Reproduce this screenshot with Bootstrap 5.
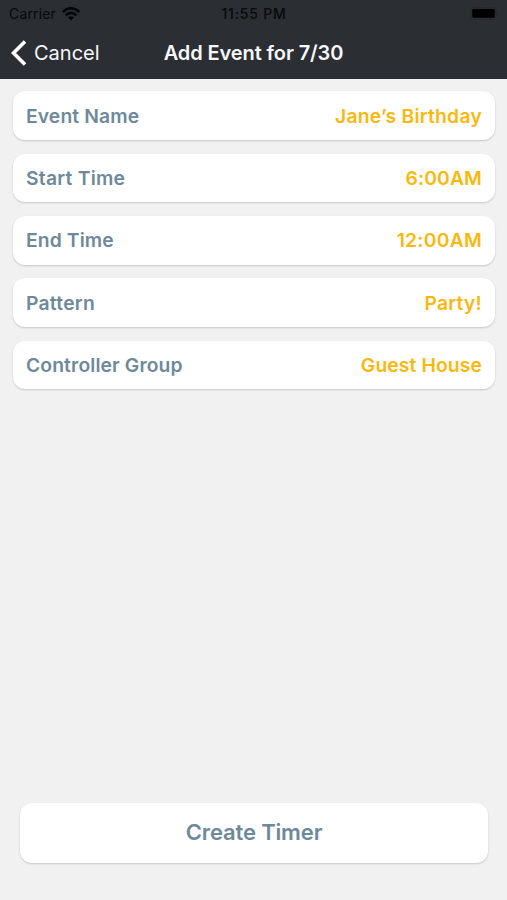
<!DOCTYPE html>
<html lang="en">
<head>
<meta charset="utf-8">
<meta name="viewport" content="width=device-width, initial-scale=1">
<title>Add Event</title>
<link href="https://cdn.jsdelivr.net/npm/bootstrap@5.3.0/dist/css/bootstrap.min.css" rel="stylesheet">
<style>
body { font-family: Inter, "Liberation Sans", sans-serif; background: #f1f1f1; }
svg { display: block; }
.top-bar { height: 79px; background: #2b2e33; }
.status-row { height: 27px; font-size: 14px; line-height: 27px; color: #08090b; padding: 0 8px 0 9px; }
.carrier { letter-spacing: .15px; margin-right: 6px; }
.status-time { font-weight: 500; letter-spacing: .8px; }
.title-row { height: 52px; line-height: 52px; color: #f7f8fa; padding: 0 11px; }
.cancel-btn { font-size: 20px; color: inherit; gap: 7px; }
.screen-title { font-size: 20px; font-weight: 600; letter-spacing: -.1px; }
.fields { padding: 12.4px 12px 0 13px; gap: 13.6px; }
.field-card { height: 48.7px; border-radius: 12px; box-shadow: 0 1px 2px rgba(0,0,0,.18); padding: 1px 13px 0; font-size: 19.3px; font-weight: 600; letter-spacing: .12px; }
.spaced { letter-spacing: .25px; }
.slate { color: #6d899a; }
.amber { color: #fab80d; }
.create-wrap { padding: 0 19px 37px 20px; }
.create-btn, .create-btn:hover { height: 60px; border: 0; border-radius: 12px; background: #fff; color: #6d899a; font-size: 22px; font-weight: 600; letter-spacing: -.15px; padding-bottom: 8px; box-shadow: 0 1px 2px rgba(0,0,0,.18); }
</style>
<script src="https://cdn.jsdelivr.net/npm/bootstrap@5.3.0/dist/js/bootstrap.bundle.min.js"></script>
</head>
<body>
<div class="d-flex flex-column vh-100">
  <header class="top-bar flex-shrink-0">
    <div class="status-row row g-0 align-items-center">
      <div class="col d-flex align-items-center"><span class="carrier">Carrier</span>
        <svg width="18" height="14" viewBox="0 0 18 14" fill="none" stroke="#050607" stroke-width="2.5"><path d="M.8 5Q9-2.6 17.2 5M3.6 8.2Q9 3.6 14.4 8.2"/><path d="M6 10.3Q9 8 12 10.3L9 13.6Z" fill="#050607" stroke="none"/></svg>
      </div>
      <div class="col-auto status-time">11:55 PM</div>
      <div class="col d-flex justify-content-end">
        <svg width="29" height="13" viewBox="0 0 29 13"><rect x=".7" y=".7" width="25.6" height="11.6" rx="3" fill="none" stroke="#26282d"/><rect x="2.3" y="2" width="22.5" height="8.8" rx="1.2" fill="#000"/><path d="M27.3 4.5Q29 6.5 27.3 8.5Z" fill="#222429"/></svg>
      </div>
    </div>
    <div class="title-row row g-0">
      <div class="col"><a href="#" class="cancel-btn d-inline-flex align-items-center text-decoration-none">
        <svg width="16" height="26" viewBox="0 0 16 26" fill="none" stroke="#fff" stroke-width="3.6"><path d="M14 1.5 2.5 13 14 24.5"/></svg><span>Cancel</span></a></div>
      <div class="col-auto screen-title">Add Event for 7/30</div>
      <div class="col"></div>
    </div>
  </header>
  <main class="fields d-flex flex-column flex-grow-1">
    <div class="field-card bg-white d-flex justify-content-between align-items-center"><span class="slate">Event Name</span><span class="amber spaced">Jane’s Birthday</span></div>
    <div class="field-card bg-white d-flex justify-content-between align-items-center"><span class="slate spaced">Start Time</span><span class="amber">6:00AM</span></div>
    <div class="field-card bg-white d-flex justify-content-between align-items-center"><span class="slate">End Time</span><span class="amber spaced">12:00AM</span></div>
    <div class="field-card bg-white d-flex justify-content-between align-items-center"><span class="slate spaced">Pattern</span><span class="amber spaced">Party!</span></div>
    <div class="field-card bg-white d-flex justify-content-between align-items-center"><span class="slate">Controller Group</span><span class="amber">Guest House</span></div>
  </main>
  <footer class="create-wrap"><button type="button" class="btn create-btn w-100">Create Timer</button></footer>
</div>
</body>
</html>
